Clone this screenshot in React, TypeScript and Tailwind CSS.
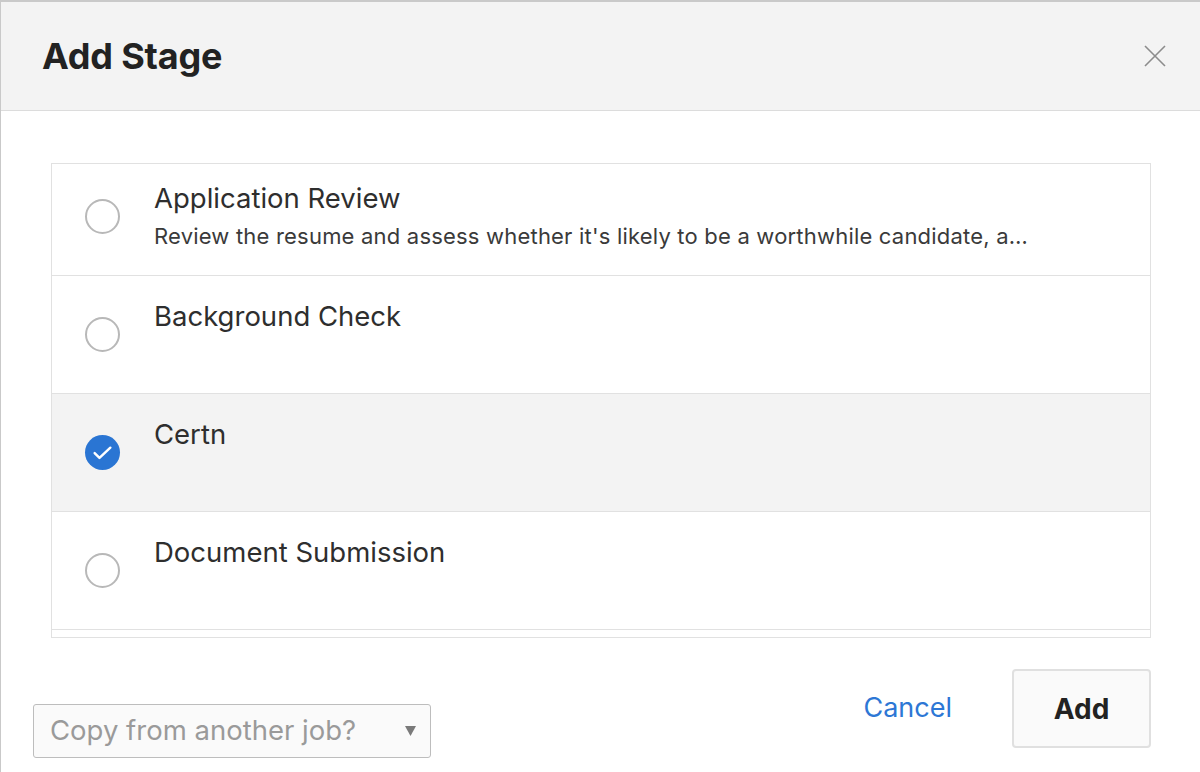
import React, { useState } from 'react';

const stages = [
  {
    id: 'application-review',
    name: 'Application Review',
    description: "Review the resume and assess whether it's likely to be a worthwhile candidate, a…",
  },
  { id: 'background-check', name: 'Background Check', description: '' },
  { id: 'certn', name: 'Certn', description: '' },
  { id: 'document-submission', name: 'Document Submission', description: '' },
  { id: 'hiring-manager-review', name: 'Hiring Manager Review', description: '' },
];

const Radio: React.FC<{ checked: boolean }> = ({ checked }) =>
  checked ? (
    <span className="flex h-[35px] w-[35px] shrink-0 items-center justify-center rounded-full bg-[#2a75d3]">
      <svg viewBox="0 0 24 24" className="h-[29px] w-[29px]" fill="none" stroke="#fff" strokeWidth="2" strokeLinecap="round" strokeLinejoin="round">
        <path d="M5.5 12.5l4 4L18.5 8" />
      </svg>
    </span>
  ) : (
    <span className="h-[35px] w-[35px] shrink-0 rounded-full border-2 border-[#b8b8b8] bg-white" />
  );

const App: React.FC = () => {
  const [selected, setSelected] = useState('certn');

  return (
    <div
      className="h-[772px] w-full overflow-hidden border-l border-t-2 border-[#c9c9c9] bg-white text-[#2e2e2e]"
      style={{ fontFamily: 'Inter, "Noto Sans", sans-serif' }}
    >
      {/* Header */}
      <div className="flex h-[109px] items-center justify-between border-b border-[#dcdcdc] bg-[#f3f3f3] pl-[41px] pr-[34px]">
        <h1 className="text-[36px] font-bold tracking-[-0.2px] text-[#222]">Add Stage</h1>
        <button className="text-[#8c8c8c]" aria-label="Close">
          <svg viewBox="0 0 22 22" className="h-[22px] w-[22px]" fill="none" stroke="currentColor" strokeWidth="1.6">
            <path d="M1 1l20 20M21 1L1 21" />
          </svg>
        </button>
      </div>

      {/* Stage list */}
      <div className="pl-[50px] pr-[49px] pt-[52px]">
        <div className="h-[475px] overflow-hidden border border-[#e1e1e1]">
          <div className="-mt-[6px]">
            {stages.map((stage) => {
              const isSelected = stage.id === selected;
              return (
                <div
                  key={stage.id}
                  onClick={() => setSelected(stage.id)}
                  className={`flex h-[118px] cursor-pointer items-center border-b border-[#e1e1e1] pl-[33px] pr-[40px] ${
                    isSelected ? 'bg-[#f3f3f3]' : 'bg-white'
                  }`}
                >
                  <Radio checked={isSelected} />
                  <div className="ml-[34px] min-w-0 flex-1 self-start pt-[24px]">
                    <div className="text-[27.5px] leading-[32px] text-[#2e2e2e]">{stage.name}</div>
                    {stage.description && (
                      <div className="mt-[6px] truncate text-[22px] leading-[32px] tracking-[0.2px] text-[#3a3a3a]">
                        {stage.description}
                      </div>
                    )}
                  </div>
                </div>
              );
            })}
          </div>
        </div>
      </div>

      {/* Footer */}
      <div className="flex items-start justify-between pl-[32px] pr-[49px]">
        <div className="mt-[66px] flex h-[54px] w-[398px] items-center justify-between rounded-[3px] border border-[#bdbdbd] bg-[#fafafa] pl-[16px] pr-[14px]">
          <span className="text-[27.5px] text-[#9a9a9a]">Copy from another job?</span>
          <svg viewBox="0 0 10 9" className="h-[10px] w-[11px]" fill="#7a7a7a">
            <path d="M0 0h10L5 9z" />
          </svg>
        </div>
        <div className="mt-[31px] flex items-center">
          <button className="text-[27px] text-[#2d77d5]">Cancel</button>
          <button className="ml-[60px] flex h-[79px] w-[139px] items-center justify-center rounded-[4px] border-2 border-[#e0e0e0] bg-[#fafafa] text-[28px] font-bold text-[#222]">
            Add
          </button>
        </div>
      </div>
    </div>
  );
};

export default App;
